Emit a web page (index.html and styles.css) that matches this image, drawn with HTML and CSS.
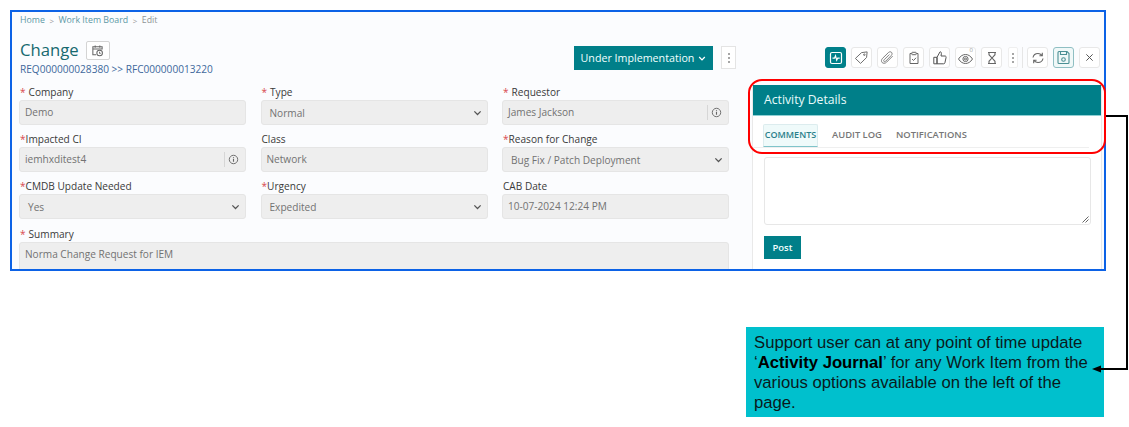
FILE: index.html
```html
<!DOCTYPE html>
<html lang="en">
<head>
<meta charset="utf-8">
<title>Change</title>
<link rel="stylesheet" href="styles.css">
</head>
<body>
<svg width="0" height="0" class="defs">
  <symbol id="chev" viewBox="0 0 10 6"><path d="M1.5 1.2 5 4.7l3.5-3.5" fill="none" stroke="#555" stroke-width="1.4"/></symbol>
  <symbol id="info" viewBox="0 0 12 12"><circle cx="6" cy="6" r="4.6" fill="none" stroke="#666" stroke-width="1"/><path d="M6 5.2v3.2M6 3.2v1" stroke="#666" stroke-width="1.2"/></symbol>
</svg>
<main class="frame">
  <div class="columns">
    <section class="left">
      <nav class="crumbs"><span class="crumb">Home</span><span class="sep">&gt;</span><span class="crumb">Work Item Board</span><span class="sep">&gt;</span><span class="crumb-now">Edit</span></nav>
      <div class="head">
        <div class="head-title">
          <div class="title-row">
            <h1 class="title">Change</h1>
            <span class="cal-btn"><svg width="13" height="13" viewBox="0 0 14 14" fill="none" stroke="#666" stroke-width="1.1"><path d="M5.5 11.5H2V3h10v3M2 5.5h10M4.5 1.5V4M9.5 1.5V4"/><circle cx="9.3" cy="9.7" r="3"/><path d="M9.3 8.3v1.5l1 .6"/></svg></span>
          </div>
          <div class="ref">REQ000000028380 &gt;&gt; RFC000000013220</div>
        </div>
        <div class="status">
          <span class="status-btn">Under Implementation<svg width="8" height="5" viewBox="0 0 10 6"><path d="M1.5 1.2 5 4.7l3.5-3.5" fill="none" stroke="#fff" stroke-width="1.6"/></svg></span>
          <span class="dots-btn"><i></i><i></i><i></i></span>
        </div>
      </div>
      <form class="form">
        <div class="field"><label class="lbl"><b class="req spaced">*</b>Company</label><div class="ctl">Demo</div></div>
        <div class="field"><label class="lbl"><b class="req spaced">*</b>Type</label><div class="ctl sel">Normal<svg class="chev"><use href="#chev"/></svg></div></div>
        <div class="field"><label class="lbl"><b class="req spaced">*</b>Requestor</label><div class="ctl">James Jackson<span class="addon"><svg width="11" height="11"><use href="#info"/></svg></span></div></div>
        <div class="field"><label class="lbl"><b class="req">*</b>Impacted CI</label><div class="ctl">iemhxditest4<span class="addon"><svg width="11" height="11"><use href="#info"/></svg></span></div></div>
        <div class="field"><label class="lbl">Class</label><div class="ctl">Network</div></div>
        <div class="field"><label class="lbl"><b class="req">*</b>Reason for Change</label><div class="ctl sel">Bug Fix / Patch Deployment<svg class="chev"><use href="#chev"/></svg></div></div>
        <div class="field"><label class="lbl"><b class="req">*</b>CMDB Update Needed</label><div class="ctl sel">Yes<svg class="chev"><use href="#chev"/></svg></div></div>
        <div class="field"><label class="lbl"><b class="req">*</b>Urgency</label><div class="ctl sel">Expedited<svg class="chev"><use href="#chev"/></svg></div></div>
        <div class="field"><label class="lbl">CAB Date</label><div class="ctl">10-07-2024 12:24 PM</div></div>
        <div class="field wide"><label class="lbl"><b class="req spaced">*</b>Summary</label><div class="ctl tall">Norma Change Request for IEM</div></div>
      </form>
    </section>
    <section class="right">
      <div class="toolbar">
        <span class="tb on"><svg width="14" height="14" viewBox="0 0 14 14" fill="none" stroke="#fff" stroke-width="1.2"><rect x="1.5" y="1.5" width="11" height="11" rx="1.5"/><path d="M3.5 7.2h2l1-2.4 1.2 4.4 1-2h2"/></svg></span>
        <span class="tb"><svg width="15" height="15" viewBox="0 0 16 16" fill="none" stroke="#666" stroke-width="1"><path d="M1.5 9 8 2.8l6-.8-.6 6L7 14.3z"/><circle cx="11" cy="5" r=".8"/></svg></span>
        <span class="tb"><svg width="15" height="15" viewBox="0 0 16 16" fill="none" stroke="#777" stroke-width="1"><path d="M13.5 6.5 7 13c-1.5 1.5-3.6 1.5-4.7.4s-1-3 .4-4.5L9 2.700c1-1 2.500-1 3.300-.2s.8 2.200-.2 3.200L6 12c-.6.6-1.400.6-1.800.2s-.4-1.200.2-1.800L10 4.800"/></svg></span>
        <span class="tb"><svg width="14" height="14" viewBox="0 0 14 14" fill="none" stroke="#666" stroke-width="1"><path d="M4.500 2.500H3v10h8v-10H9.500"/><rect x="4.800" y="1.300" width="4.400" height="2.400" rx=".6"/><path d="m5 8 1.500 1.500L9 6.800"/></svg></span>
        <span class="tb"><svg width="16" height="16" viewBox="0 0 16 16" fill="none" stroke="#555" stroke-width="1"><path d="M5 7.300 8 1.800c1 0 1.600.8 1.400 1.800L9 6h4c.8 0 1.300.7 1.100 1.400l-1.200 5.400c-.1.600-.6 1-1.200 1H5zM1.800 7.300H5v6.500H1.800z"/></svg></span>
        <span class="tb"><svg width="18" height="17" viewBox="0 0 18 17" fill="none" stroke="#666" stroke-width="1"><path d="M1.500 10C3.500 6.800 6 5.500 8.500 5.500s5 1.300 7 4.500c-2 3.200-4.500 4.500-7 4.500s-5-1.300-7-4.500z"/><circle cx="8.500" cy="10" r="2.600"/><circle cx="8.500" cy="10" r="1"/></svg><em class="badge">0</em></span>
        <span class="tb"><svg width="12" height="14" viewBox="0 0 12 14" fill="none" stroke="#666" stroke-width="1.1"><path d="M2 1.500h8M2 12.500h8M3 1.500v2.200L6 7l3-3.300V1.500M3 12.500v-2.200L6 7l3 3.300v2.200"/></svg></span>
        <span class="tb-dots"><i></i><i></i><i></i></span>
        <span class="tb-div"></span>
        <span class="tb"><svg width="14" height="14" viewBox="0 0 14 14" fill="none" stroke="#666" stroke-width="1.1"><path d="M2 6.500C2.500 4 4.500 2.500 7 2.500c1.700 0 3 .8 4 2M12 7.500c-.5 2.500-2.500 4-5 4-1.700 0-3-.8-4-2M11.300 1.800v2.900H8.400M2.700 12.200V9.300h2.900"/></svg></span>
        <span class="tb save"><svg width="15" height="15" viewBox="0 0 15 15" fill="none" stroke="#4b8f94" stroke-width="1.1"><path d="M2 2.500c0-.5.400-1 1-1h8l2 2v9c0 .5-.4 1-1 1H3c-.6 0-1-.5-1-1z"/><path d="M4.500 1.500v3h6v-3"/><circle cx="7.500" cy="9.500" r="1.800"/></svg></span>
        <span class="tb"><svg width="9" height="9" viewBox="0 0 10 10" fill="none" stroke="#555" stroke-width="1.100"><path d="m1.500 1.500 7 7M8.500 1.500l-7 7"/></svg></span>
      </div>
      <div class="panel">
        <h2 class="panel-head">Activity Details</h2>
        <div class="tabs"><span class="tab active">COMMENTS</span><span class="tab">AUDIT LOG</span><span class="tab">NOTIFICATIONS</span></div>
        <div class="panel-body">
          <div class="area"><svg class="grip" width="7" height="7" viewBox="0 0 7 7" stroke="#555" stroke-width=".9"><path d="M.5 6.500l6-6M3.500 6.500l3-3"/></svg></div>
          <span class="post">Post</span>
        </div>
      </div>
    </section>
  </div>
</main>
<div class="highlight"></div>
<aside class="callout">Support user can at any point of time update ‘<strong>Activity Journal</strong>’ for any Work Item from the various options available on the left of the page.</aside>
<svg class="connector" width="1129" height="427" viewBox="0 0 1129 427"><path d="M1106 116h21v253h-28" fill="none" stroke="#000" stroke-width="2"/><path d="M1092 369l9-3.500v7z" fill="#000"/></svg>
</body>
</html>
```
FILE: styles.css
```css
* { box-sizing: border-box; }
html, body { margin: 0; padding: 0; }
body { width: 1129px; height: 427px; background: #fff; overflow: hidden; position: relative; font-family: "Open Sans", "Liberation Sans", sans-serif; }
.defs { position: absolute; }
.frame { margin: 10px 0 0 10px; width: 1096px; height: 261px; border: 2px solid #0c62e6; background: #fbfcfe; overflow: hidden; }
.columns { display: flex; height: 100%; }
.left { width: 740px; padding: 1px 23px 0 7px; flex: none; }
.crumbs { display: flex; align-items: center; gap: 4px; height: 14px; padding-left: 1px; font-size: 8.800px; color: #888; }
.crumb { color: #5d99a5; }
.sep { color: #999; font-size: 8px; margin: 0 .5px; }
.crumb-now { color: #8e9496; }
.head { display: flex; justify-content: space-between; margin: 11px -7px 0 0; height: 46px; }
.head-title { padding-left: 1px; }
.title-row { display: flex; align-items: center; gap: 7px; height: 24px; margin-bottom: 1px; }
.title { margin: 0; font-size: 16.700px; font-weight: 400; color: #17696f; line-height: 24px; }
.cal-btn { width: 24px; height: 19px; border: 1px solid #d4d4d4; border-radius: 2px; display: flex; align-items: center; justify-content: center; background: #fff; }
.ref { font-size: 10.100px; color: #40689c; line-height: 12px; }
.status { display: flex; gap: 8px; margin-top: 8px; height: 24px; }
.status-btn { width: 139px; height: 24px; background: #007f89; color: #f2ffff; font-size: 10.700px; display: flex; align-items: center; justify-content: center; gap: 4px; }
.dots-btn { width: 15px; height: 23px; border: 1px solid #e4e4e4; display: flex; flex-direction: column; align-items: center; justify-content: center; gap: 2px; background: #fff; }
.dots-btn i, .tb-dots i { width: 2px; height: 2px; background: #888; border-radius: 50%; }
.form { display: grid; grid-template-columns: repeat(3, 227px); column-gap: 14.500px; row-gap: 6px; }
.wide { grid-column: 1 / 4; margin-top: 1px; }
.field { display: flex; flex-direction: column; }
.lbl { height: 16px; font-size: 10.100px; line-height: 16px; color: #3a3a3a; padding-left: 1px; }
.req { font-weight: 400; color: #d8494f; }
.req.spaced { margin-right: 3px; }
.ctl { height: 25px; background: #eeeeee; border: 1px solid #e5e5e5; border-radius: 3px; font-size: 10.100px; color: #727272; padding: 0 5px 2px; display: flex; align-items: center; justify-content: space-between; }
.sel { padding: 0 5px 0 8px; }
.tall { height: 50px; align-items: flex-start; padding-top: 4px; }
.chev { width: 9px; height: 6px; }
.addon { width: 20px; height: 15px; border-left: 1px solid #d6d6d6; margin: 2px -4px 0 0; padding-right: 3px; display: flex; align-items: center; justify-content: center; }
.right { width: 352px; flex: none; }
.toolbar { display: flex; align-items: center; height: 21px; margin-top: 35px; padding-left: 73px; gap: 5px; }
.tb { width: 21px; height: 21px; border: 1px solid #e8e8e8; border-radius: 3px; background: #fff; display: flex; align-items: center; justify-content: center; position: relative; }
.tb.on { background: #00808a; border-color: #00808a; }
.tb.save { border-color: #8fbfc3; background: #f0f8f8; }
.badge { position: absolute; top: -1px; right: 2px; font-size: 6px; font-style: normal; color: #999; line-height: 7px; }
.tb-dots { width: 10px; height: 21px; border: 1px solid #efefef; border-radius: 2px; display: flex; flex-direction: column; align-items: center; justify-content: center; gap: 2px; margin-left: 1px; background: #fff; }
.tb-div { width: 1px; height: 21px; background: #e6e6e6; margin: 0 -1px; }
.panel { margin-top: 17px; width: 350px; height: 200px; border-left: 1px solid #e9e9e9; border-right: 1px solid #e9e9e9; background: #fff; }
.panel-head { margin: 0; height: 31px; background: #007f89; color: #e9fbfb; font-size: 12.200px; font-weight: 400; line-height: 29px; padding-left: 11px; border-bottom: 1px solid #8fd0d4; }
.tabs { display: flex; gap: 14px; height: 32px; padding: 8px 0 0 10px; margin-right: 12px; border-bottom: 1px solid #efefef; }
.tab { font-size: 9.400px; font-weight: 600; color: #777; height: 23px; line-height: 21px; }
.tab.active { color: #2b7f8a; background: #effafa; border: 1px solid #dcecee; border-bottom: 1px solid #7fc4ca; border-radius: 2px 2px 0 0; width: 55px; text-align: center; line-height: 20px; font-size: 9px; white-space: nowrap; }
.panel-body { padding: 9px 11px 0 11px; }
.area { position: relative; width: 327px; height: 68px; border: 1px solid #e7e7e7; border-radius: 3px; background: #fff; }
.grip { position: absolute; right: 1px; bottom: 1px; }
.post { display: flex; align-items: center; justify-content: center; margin-top: 11px; width: 37px; height: 23px; background: #007f89; color: #f0fdfd; font-size: 9.500px; font-weight: 600; }
.highlight { position: absolute; left: 748px; top: 79px; width: 358px; height: 75px; border: 2px solid #f00; border-radius: 14px; }
.connector { position: absolute; left: 0; top: 0; pointer-events: none; }
.callout { position: absolute; left: 746px; top: 327px; width: 358px; height: 90px; background: #00c0cd; color: #0a1a1c; font-family: "Liberation Sans", Arial, sans-serif; font-size: 16.700px; line-height: 20px; padding: 6px 8px 0; }
.callout strong { font-weight: 700; color: #000; }
```
